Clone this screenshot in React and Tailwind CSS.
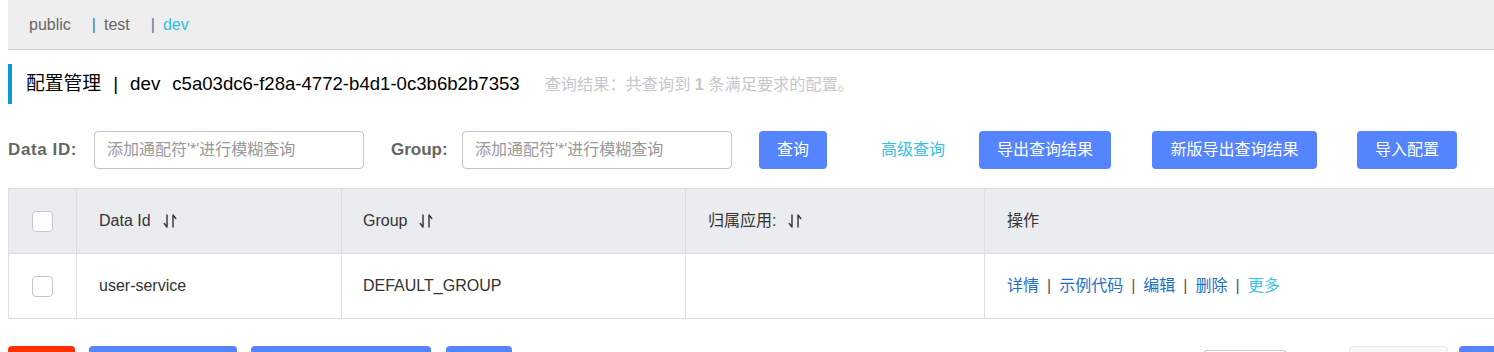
const tabs = [
  { name: "public", active: false, pipe: false },
  { name: "test", active: false, pipe: true },
  { name: "dev", active: true, pipe: true },
];

function SortIcon() {
  return (
    <svg width="14" height="16" viewBox="0 0 14 16" fill="none" className="ml-[12px]">
      <path d="M4 2v12L1.2 10.5" stroke="#333" strokeWidth="1.4" strokeLinecap="round" strokeLinejoin="round" />
      <path d="M10 14V2l2.8 3.5" stroke="#333" strokeWidth="1.4" strokeLinecap="round" strokeLinejoin="round" />
    </svg>
  );
}

function Checkbox() {
  return <span className="block h-[21px] w-[21px] rounded-[4px] border border-[#c4c6cf] bg-white" />;
}

function Button({ children, className = "" }) {
  return (
    <button
      className={`flex h-[38px] items-center justify-center rounded-[4px] bg-[#5584ff] text-[16px] text-white ${className}`}
    >
      {children}
    </button>
  );
}

const actions = ["详情", "示例代码", "编辑", "删除"];

export default function App() {
  return (
    <div className="h-[352px] overflow-hidden bg-white font-['Liberation_Sans','Noto_Sans_CJK_SC',sans-serif] text-[#333]">
      <div className="w-[1560px] pl-[8px]">
        {/* namespace tabs */}
        <div className="flex h-[50px] items-center border-b border-[#cccccc] bg-[#eeeeee] pl-[21px] text-[16px]">
          {tabs.map((t) => (
            <span key={t.name} className="mr-[21px] flex items-center">
              {t.pipe && <span className="mr-[8px] text-[#3d78b0]">|</span>}
              <span className={t.active ? "text-[#2ebde6]" : "text-[#666]"}>{t.name}</span>
            </span>
          ))}
        </div>

        {/* title */}
        <div className="mt-[14px] flex h-[40px] items-center border-l-[4px] border-[#0a9ad2] pl-[14px]">
          <span className="text-[18.8px] text-black">配置管理</span>
          <span className="mx-[12px] text-[18.8px] text-black">|</span>
          <span className="text-[18.8px] text-black">dev</span>
          <span className="ml-[12px] text-[18.6px] text-black">c5a03dc6-f28a-4772-b4d1-0c3b6b2b7353</span>
          <span className="ml-[25px] text-[16.2px] text-[#c5c8ce]">
            查询结果：共查询到 <b>1</b> 条满足要求的配置。
          </span>
        </div>

        {/* search */}
        <div className="mt-[27px] flex h-[38px] items-center">
          <label className="w-[86px] text-[17px] font-bold tracking-[0.6px] text-[#666]">Data ID:</label>
          <input
            placeholder="添加通配符'*'进行模糊查询"
            className="h-[38px] w-[270px] rounded-[4px] border border-[#c4c6cf] px-[12px] text-[16px] outline-none placeholder:text-[#999]"
          />
          <label className="ml-[27px] w-[71px] text-[17px] font-bold text-[#666]">Group:</label>
          <input
            placeholder="添加通配符'*'进行模糊查询"
            className="h-[38px] w-[270px] rounded-[4px] border border-[#c4c6cf] px-[12px] text-[16px] outline-none placeholder:text-[#999]"
          />
          <Button className="ml-[27px] w-[68px]">查询</Button>
          <span className="ml-[54px] text-[16px] text-[#35c2e4]">高级查询</span>
          <Button className="ml-[34px] w-[132px]">导出查询结果</Button>
          <Button className="ml-[41px] w-[165px]">新版导出查询结果</Button>
          <Button className="ml-[40px] w-[100px]">导入配置</Button>
        </div>

        {/* table */}
        <div className="mt-[19px] border-l border-t border-[#dcdee3] text-[16px]">
          <div className="grid grid-cols-[68px_265px_344px_299px_1fr] bg-[#ebecf0]">
            <div className="flex h-[65px] items-center justify-center border-b border-r border-[#dcdee3]">
              <Checkbox />
            </div>
            <div className="flex h-[65px] items-center border-b border-r border-[#dcdee3] pl-[22px]">
              Data Id <SortIcon />
            </div>
            <div className="flex h-[65px] items-center border-b border-r border-[#dcdee3] pl-[21px]">
              Group <SortIcon />
            </div>
            <div className="flex h-[65px] items-center border-b border-r border-[#dcdee3] pl-[22px]">
              归属应用: <SortIcon />
            </div>
            <div className="flex h-[65px] items-center border-b border-[#dcdee3] pl-[22px]">操作</div>
          </div>
          <div className="grid grid-cols-[68px_265px_344px_299px_1fr] bg-white">
            <div className="flex h-[65px] items-center justify-center border-b border-r border-[#dcdee3]">
              <Checkbox />
            </div>
            <div className="flex h-[65px] items-center border-b border-r border-[#dcdee3] pl-[22px]">
              user-service
            </div>
            <div className="flex h-[65px] items-center border-b border-r border-[#dcdee3] pl-[21px]">
              DEFAULT_GROUP
            </div>
            <div className="h-[65px] border-b border-r border-[#dcdee3]" />
            <div className="flex h-[65px] items-center border-b border-[#dcdee3] pl-[22px]">
              {actions.map((a) => (
                <span key={a} className="flex items-center">
                  <span className="text-[#1f6fc5]">{a}</span>
                  <span className="mx-[8px] text-[#555]">|</span>
                </span>
              ))}
              <span className="text-[#3ac4e8]">更多</span>
            </div>
          </div>
        </div>

        {/* bottom actions, only their top edge is in view */}
        <div className="mt-[27px] flex items-start">
          <div className="h-[32px] w-[67px] rounded-[4px] bg-[#ff3000]" />
          <div className="ml-[14px] h-[32px] w-[148px] rounded-[4px] bg-[#5584ff]" />
          <div className="ml-[14px] h-[32px] w-[180px] rounded-[4px] bg-[#5584ff]" />
          <div className="ml-[15px] h-[32px] w-[66px] rounded-[4px] bg-[#5584ff]" />
          <div className="ml-[691px] mt-[4px] h-[28px] w-[84px] rounded-[4px] border border-[#c4c6cf] bg-white" />
          <div className="ml-[62px] h-[32px] w-[99px] rounded-[4px] border border-[#e6e7eb] bg-[#f7f8fa]" />
          <div className="ml-[11px] h-[32px] w-[40px] rounded-[4px] bg-[#5584ff]" />
        </div>
      </div>
    </div>
  );
}
